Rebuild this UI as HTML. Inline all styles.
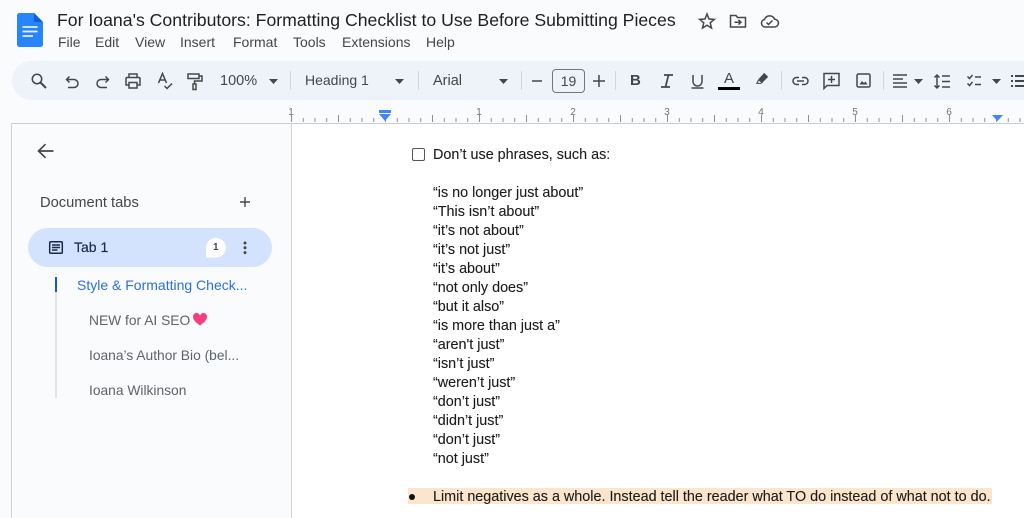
<!DOCTYPE html>
<html><head><meta charset="utf-8"><style>
html{background:#f9fbfd}
html,body{margin:0;padding:0;width:1024px;height:518px;overflow:hidden}
body{position:relative;font-family:"Liberation Sans",sans-serif;background:#f9fbfd;filter:blur(.3px)}
.t{position:absolute;white-space:nowrap;line-height:20px;height:20px}
.m{color:#444746;font-size:14px;top:32px}
.tb{color:#444746;font-size:14px;top:71px}
.d{color:#1a1a1a;font-size:14.67px;left:433px;transform:scaleX(.98);transform-origin:0 50%;-webkit-text-stroke:.1px #1a1a1a}
.s{color:#5f6368;font-size:13.8px;left:89px}
.r{color:#70757a;font-size:10px;top:107px;line-height:12px;height:12px;transform:translateX(-50%)}
svg{position:absolute;overflow:visible}
.i{fill:none;stroke:#444746;stroke-width:1.5}
</style></head><body>
<!-- doc icon -->
<svg style="left:17px;top:13px" width="26" height="34" viewBox="0 0 26 34"><path d="M2.500 0H17L26 9V31.500A2.500 2.500 0 0 1 23.500 34H2.500A2.500 2.500 0 0 1 0 31.500V2.500A2.500 2.500 0 0 1 2.500 0Z" fill="#2684fc"/><path d="M17 0L26 9H19A2 2 0 0 1 17 7Z" fill="#0e5fd8"/><path d="M5.500 14H20.500M5.500 18.500H20.500M5.500 23H16" stroke="#fff" stroke-width="1.800" opacity=".9"/></svg>
<div class="t" style="left:57px;top:10px;font-size:17.66px;color:#1f1f1f">For Ioana's Contributors: Formatting Checklist to Use Before Submitting Pieces</div>
<svg class="i" style="left:698px;top:12px" width="18" height="18" viewBox="0 0 18 18"><path d="M9 2L11 7L16.300 7.400L12.200 10.800L13.500 16L9 13.200L4.500 16L5.800 10.800L1.700 7.400L7 7Z"/></svg>
<svg class="i" style="left:729px;top:12px" width="18" height="18" viewBox="0 0 18 18"><path d="M1.500 15V3.500H7L8.500 5.500H16.500V15ZM5.500 10.200H12M9.500 7.800L12 10.200L9.500 12.600"/></svg>
<svg class="i" style="left:760px;top:12px" width="19" height="18" viewBox="0 0 19 18"><path d="M5 15A3.800 3.800 0 0 1 4.500 7.500A5.400 5.400 0 0 1 14.600 7.200A3.900 3.900 0 0 1 14.500 15ZM6.500 10.500L8.500 12.500L12.500 8.500"/></svg>
<div class="t m" style="left:58px">File</div>
<div class="t m" style="left:95px">Edit</div>
<div class="t m" style="left:135px">View</div>
<div class="t m" style="left:180px">Insert</div>
<div class="t m" style="left:233px">Format</div>
<div class="t m" style="left:293px">Tools</div>
<div class="t m" style="left:342px">Extensions</div>
<div class="t m" style="left:426px">Help</div>

<!-- toolbar -->
<div style="position:absolute;left:12px;top:61px;width:1040px;height:39px;background:#eef2f9;border-radius:20px"></div>
<svg class="i" style="left:30px;top:72px" width="18" height="18" viewBox="0 0 18 18"><circle cx="7" cy="7" r="4.700"/><path d="M10.500 10.500L16 16" stroke-width="2"/></svg>
<svg class="i" style="left:63px;top:74px" width="18" height="18" viewBox="0 0 18 18"><path d="M4 5.500H11A3.800 3.800 0 0 1 11 13.500H5M6.500 2.500L3.500 5.500L6.500 8.500"/></svg>
<svg class="i" style="left:94px;top:74px" width="18" height="18" viewBox="0 0 18 18"><path d="M14 5.500H7A3.800 3.800 0 0 0 7 13.500H13M11.500 2.500L14.500 5.500L11.500 8.500"/></svg>
<svg class="i" style="left:124px;top:72px" width="18" height="18" viewBox="0 0 18 18"><path d="M5 5V2H13V5M5 13H2V6.500Q2 5.500 3 5.500H15Q16 5.500 16 6.500V13H13M5 10.500H13V16H5Z"/></svg>
<svg class="i" style="left:156px;top:71px" width="18" height="20" viewBox="0 0 18 20"><path d="M2.500 12L6.500 2.500L10.500 12M4 9H9M8.500 15L11 17.500L16 12.500"/></svg>
<svg class="i" style="left:186px;top:72px" width="18" height="19" viewBox="0 0 18 19"><path d="M2 2H13V6.500H2ZM13 4H16V9H8.500V12M7 12H10V17.500H7Z"/></svg>
<div class="t tb" style="left:220px;font-size:14.5px">100%</div>
<svg style="left:269px;top:79px" width="9" height="5"><path d="M0 0H9L4.500 5Z" fill="#444746"/></svg>
<div style="position:absolute;left:290px;top:71px;width:1px;height:19px;background:#d3d5d8"></div>
<div class="t tb" style="left:305px;top:70px">Heading 1</div>
<svg style="left:395px;top:79px" width="9" height="5"><path d="M0 0H9L4.500 5Z" fill="#444746"/></svg>
<div style="position:absolute;left:418px;top:71px;width:1px;height:19px;background:#d3d5d8"></div>
<div class="t tb" style="left:433px;top:71px;font-size:14.5px">Arial</div>
<svg style="left:499px;top:79px" width="9" height="5"><path d="M0 0H9L4.500 5Z" fill="#444746"/></svg>
<div style="position:absolute;left:521px;top:71px;width:1px;height:19px;background:#d3d5d8"></div>
<svg class="i" style="left:532px;top:76px" width="10" height="10"><path d="M0 5H10"/></svg>
<div class="t" style="left:552px;top:69px;width:31px;height:22px;border:1px solid #747775;border-radius:4px;text-align:center;font-size:14px;color:#444746;line-height:22px">19</div>
<svg class="i" style="left:593px;top:75px" width="12" height="12"><path d="M0 6H12M6 0V12"/></svg>
<div style="position:absolute;left:615px;top:71px;width:1px;height:19px;background:#d3d5d8"></div>
<div class="t tb" style="left:630px;top:71px;font-weight:bold;font-size:15px">B</div>
<svg class="i" style="left:660px;top:74px" width="14" height="14"><path d="M4 1H13M1 13H10M8.500 1L5.500 13" stroke-width="1.700"/></svg>
<svg class="i" style="left:691px;top:74px" width="13" height="15"><path d="M2 1V7.500A4.500 4.500 0 0 0 11 7.500V1M0.500 14H12.500"/></svg>
<div class="t tb" style="left:724px;top:69px;font-size:15px">A</div>
<div style="position:absolute;left:718px;top:87px;width:22px;height:3px;background:#000"></div>
<svg style="left:755px;top:72px" width="15" height="14" viewBox="0 0 15 16"><path d="M9.500 1L14 5.500L7.500 12L3 8Z" fill="#444746"/><path d="M3 9L1 13H5.500L7 12Z" fill="none" stroke="#444746" stroke-width="1.200"/></svg>
<div style="position:absolute;left:781px;top:71px;width:1px;height:19px;background:#d3d5d8"></div>
<svg class="i" style="left:792px;top:75px" width="17" height="12" viewBox="0 0 17 12"><path d="M7 2.500H4.500A3.500 3.500 0 0 0 4.500 9.500H7M10 2.500H12.500A3.500 3.500 0 0 1 12.500 9.500H10M5 6H12"/></svg>
<svg class="i" style="left:823px;top:72px" width="17" height="18" viewBox="0 0 17 18"><path d="M1 1.500H16V13.500H4L1 16.500ZM8.500 4V11M5 7.500H12"/></svg>
<svg class="i" style="left:856px;top:73px" width="15" height="15" viewBox="0 0 15 15"><rect x="1" y="1" width="13" height="13" rx="1.500"/><path d="M3.500 11.500L6 8L8 10L9.500 8.500L11.500 11.500Z" fill="#444746" stroke="none"/></svg>
<div style="position:absolute;left:883px;top:71px;width:1px;height:19px;background:#d3d5d8"></div>
<svg class="i" style="left:893px;top:74px" width="15" height="14"><path d="M0 1H14M0 5H10M0 9H14M0 13H14"/></svg>
<svg style="left:914px;top:79px" width="9" height="5"><path d="M0 0H9L4.500 5Z" fill="#444746"/></svg>
<svg class="i" style="left:934px;top:74px" width="17" height="15"><path d="M3 1V14M0.500 3.500L3 1L5.500 3.500M0.500 11.500L3 14L5.500 11.500M8 2H16M8 7.500H16M8 13H16"/></svg>
<svg class="i" style="left:967px;top:74px" width="17" height="14"><path d="M0.500 2.500L2.500 4.500L5.500 1M0.500 9.500L2.500 11.500L5.500 8M8 3H14M8 10.500H14"/></svg>
<svg style="left:992px;top:79px" width="9" height="5"><path d="M0 0H9L4.500 5Z" fill="#444746"/></svg>
<svg class="i" style="left:1011px;top:74px" width="14" height="14"><path d="M4 2H14M4 7H14M4 12H14M0 2H2M0 7H2M0 12H2" stroke-width="2"/></svg>

<!-- ruler -->
<svg style="left:0;top:100px" width="1024" height="24">
<defs><pattern id="p" x="291" y="0" width="11.750" height="24" patternUnits="userSpaceOnUse"><rect x="0" y="18" width="1" height="4" fill="#8a8f94"/></pattern>
<pattern id="q" x="291" y="0" width="47" height="24" patternUnits="userSpaceOnUse"><rect x="0" y="15" width="1" height="7" fill="#8a8f94"/></pattern></defs>
<rect x="291" width="733" height="23" fill="url(#p)"/><rect x="291" width="733" height="23" fill="url(#q)"/>
<path d="M379 10H391V13H379Z" fill="#4285f4"/><path d="M379 14H391L385 21Z" fill="#4285f4"/>
<path d="M992 15H1003L997.500 21Z" fill="#4285f4"/>
</svg>
<div class="t r" style="left:291px">1</div>
<div class="t r" style="left:479px">1</div>
<div class="t r" style="left:573px">2</div>
<div class="t r" style="left:667px">3</div>
<div class="t r" style="left:761px">4</div>
<div class="t r" style="left:855px">5</div>
<div class="t r" style="left:949px">6</div>

<!-- sidebar -->
<div style="position:absolute;left:11px;top:123px;width:1013px;height:1px;background:#c9cdd2"></div>
<div style="position:absolute;left:11px;top:123px;width:1px;height:395px;background:#d0d3d7"></div>
<div style="position:absolute;left:291px;top:123px;width:1px;height:395px;background:#d0d3d7"></div>
<div style="position:absolute;left:292px;top:124px;width:732px;height:394px;background:#fff"></div>
<svg style="left:37px;top:143px" width="17" height="16" fill="none" stroke="#444746" stroke-width="1.700"><path d="M16.500 8H2M8.500 1.200L1.500 8L8.500 14.800"/></svg>
<div class="t" style="left:40px;top:193px;font-size:14.7px;color:#444746">Document tabs</div>
<svg style="left:240px;top:197px" width="10" height="10" fill="none" stroke="#444746" stroke-width="1.400"><path d="M0 5H10M5 0V10"/></svg>
<div style="position:absolute;left:28px;top:228px;width:244px;height:39px;border-radius:20px;background:#d3e3fd"></div>
<svg style="left:49px;top:241px" width="14" height="13" fill="none" stroke="#1b2a4a" stroke-width="1.500"><rect x=".7" y=".7" width="12.600" height="11.600" rx="1"/><path d="M3 4H11M3 6.500H11M3 9H8.500"/></svg>
<div class="t" style="left:74px;top:237px;font-size:14px;color:#1b2a4a;-webkit-text-stroke:.2px #1b2a4a">Tab 1</div>
<svg style="left:206px;top:238px" width="20" height="20"><path d="M10 0A9.800 9.800 0 1 1 10 19.600H0V10A10 10 0 0 1 10 0Z" fill="#fff"/></svg>
<div class="t" style="left:213px;top:238px;font-size:10px;font-weight:bold;color:#444746">1</div>
<svg style="left:243px;top:241px" width="4" height="14" fill="#444746"><circle cx="2" cy="2" r="1.500"/><circle cx="2" cy="6.800" r="1.500"/><circle cx="2" cy="11.600" r="1.500"/></svg>
<div style="position:absolute;left:55px;top:277px;width:2px;height:121px;background:#e1e3e6"></div>
<div style="position:absolute;left:55px;top:277px;width:2px;height:15px;background:#1a56c4"></div>
<div class="t" style="left:77px;top:275px;font-size:14px;color:#2f6fd9">Style &amp; Formatting Check...</div>
<div class="t s" style="top:311px">NEW for AI SEO</div>
<svg style="left:193px;top:313px" width="14" height="13" viewBox="0 0 15 14"><path d="M7.500 13.500C2 9.500 0 7 0 4.200A3.800 3.800 0 0 1 7.500 3A3.800 3.800 0 0 1 15 4.200C15 7 13 9.500 7.500 13.500Z" fill="#f43f7f"/></svg>
<div class="t s" style="top:346px">Ioana’s Author Bio (bel...</div>
<div class="t s" style="top:381px">Ioana Wilkinson</div>

<!-- document -->
<div style="position:absolute;left:412px;top:148px;width:10.5px;height:10.5px;border:1.300px solid #555;border-radius:2px"></div>
<div class="t d" style="top:145px">Don’t use phrases, such as:</div>
<div class="t d" style="top:183px">“is no longer just about”</div>
<div class="t d" style="top:202px">“This isn’t about”</div>
<div class="t d" style="top:221px">“it’s not about”</div>
<div class="t d" style="top:240px">“it’s not just”</div>
<div class="t d" style="top:259px">“it’s about”</div>
<div class="t d" style="top:278px">“not only does”</div>
<div class="t d" style="top:297px">“but it also”</div>
<div class="t d" style="top:316px">“is more than just a”</div>
<div class="t d" style="top:335px">“aren't just”</div>
<div class="t d" style="top:354px">“isn’t just”</div>
<div class="t d" style="top:373px">“weren’t just”</div>
<div class="t d" style="top:392px">“don’t just”</div>
<div class="t d" style="top:411px">“didn’t just”</div>
<div class="t d" style="top:430px">“don’t just”</div>
<div class="t d" style="top:449px">“not just”</div>
<div style="position:absolute;left:408px;top:488px;width:584px;height:16px;background:#fce5cd"></div>
<div style="position:absolute;left:409px;top:494px;width:6px;height:6px;border-radius:50%;background:#111"></div>
<div class="t d" style="top:487px">Limit negatives as a whole. Instead tell the reader what TO do instead of what not to do.</div>
</body></html>
